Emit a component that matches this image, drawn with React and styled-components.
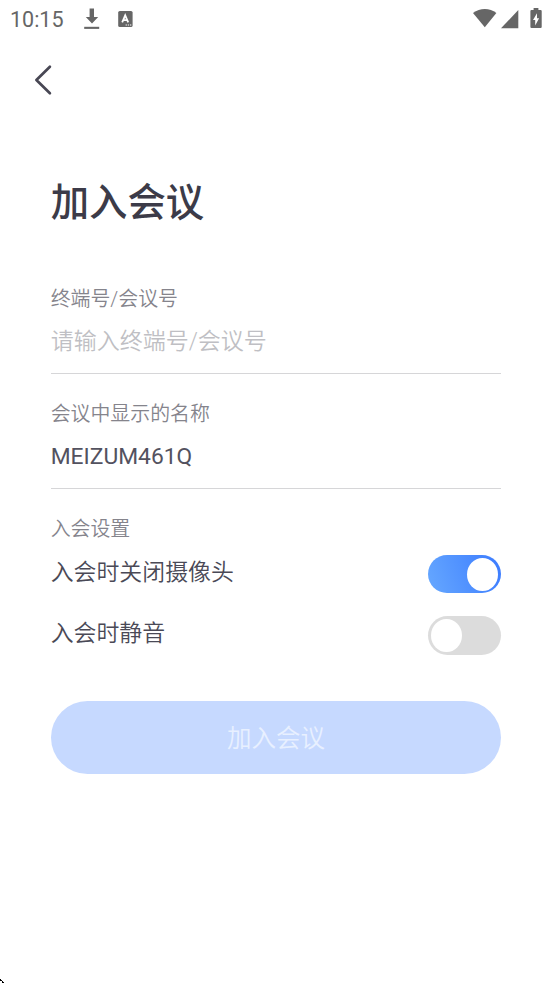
import React, { useState } from 'react';
import styled, { createGlobalStyle } from 'styled-components';

const App = () => {
  const [cameraOff, setCameraOff] = useState(true);
  const [muted, setMuted] = useState(false);

  return (
    <Screen>
      <GlobalStyle />
      <StatusBar>
        <Clock>10:15</Clock>
        <DownloadIcon />
        <KeyboardIcon />
        <StatusRight>
          <WifiIcon />
          <SignalIcon />
          <BatteryIcon />
        </StatusRight>
      </StatusBar>
      <NavBar>
        <BackButton aria-label="返回">
          <BackIcon />
        </BackButton>
      </NavBar>
      <Content>
        <Title>加入会议</Title>
        <Field>
          <Label>终端号/会议号</Label>
          <Value $empty>请输入终端号/会议号</Value>
        </Field>
        <Field>
          <Label>会议中显示的名称</Label>
          <Value>MEIZUM461Q</Value>
        </Field>
        <Label>入会设置</Label>
        <Setting>
          <SettingName>入会时关闭摄像头</SettingName>
          <Switch $on={cameraOff} onClick={() => setCameraOff(!cameraOff)}>
            <Knob />
          </Switch>
        </Setting>
        <Setting>
          <SettingName>入会时静音</SettingName>
          <Switch $on={muted} onClick={() => setMuted(!muted)}>
            <Knob />
          </Switch>
        </Setting>
        <JoinButton>
          <JoinText>加入会议</JoinText>
        </JoinButton>
      </Content>
      <Corner />
    </Screen>
  );
};

const DownloadIcon = () => (
  <Icon width="16" height="22" viewBox="0 0 16 22" $left="20px">
    <path d="M5.6 0.4h4.4v8.6h4.2L8 15.6 1.8 9h3.8z" />
    <rect x="0.2" y="18.8" width="15" height="2.1" />
  </Icon>
);

const KeyboardIcon = () => (
  <Icon width="15" height="17" viewBox="0 0 15 17" $left="18px">
    <rect x="0.2" y="0" width="14.4" height="16" rx="1.6" />
    <path d="M4.2 11.4 7.2 4.4 10.2 11.4M5.3 9.2h3.9" fill="none" stroke="#fff" strokeWidth="1.8" />
    <path d="M7.6 14h1.3M9.8 14h1.3M12 14h1.3" stroke="#fff" strokeWidth="1.2" />
  </Icon>
);

const WifiIcon = () => (
  <Icon width="24" height="20" viewBox="0 0 24 20">
    <path d="M0 4C3.6 1.3 7.6 0 11.8 0s8.2 1.3 11.6 4L11.8 18.2z" />
  </Icon>
);

const SignalIcon = () => (
  <Icon width="18" height="19" viewBox="0 0 18 19" $left="4px">
    <path d="M17.3 0V18.3H0z" />
  </Icon>
);

const BatteryIcon = () => (
  <Icon width="12" height="22" viewBox="0 0 12 22" $left="11px">
    <path d="M3.6 0h4.8v1.9h2.2q1.1 0 1.1 1.1v15.9q0 1.1-1.1 1.1H1.5q-1.1 0-1.1-1.1V3q0-1.1 1.1-1.1h2.1z" />
    <path d="M7 5.2 3 12H5.2V17.6L9.1 10.2H7z" fill="#fff" />
  </Icon>
);

const BackIcon = () => (
  <svg width="18" height="32" viewBox="0 0 18 32">
    <path
      d="M15.9 2.8 2.4 16l13.5 13.2"
      fill="none"
      stroke="#484754"
      strokeWidth="2.7"
      strokeLinecap="round"
      strokeLinejoin="round"
    />
  </svg>
);

const Corner = () => (
  <CornerMark width="4" height="4" viewBox="0 0 4 4">
    <path d="M0 0h1v1h1v1H0zM2 2h1v1h1v1H2z" />
  </CornerMark>
);

const GlobalStyle = createGlobalStyle`
  body {
    margin: 0;
    background: #fff;
    font-family: Roboto, 'Noto Sans CJK SC', sans-serif;
  }
`;

const Screen = styled.main`
  display: flex;
  flex-direction: column;
  position: relative;
  height: 983px;
  overflow: hidden;
  background: #fff;
`;

const StatusBar = styled.header`
  display: flex;
  align-items: center;
  box-sizing: border-box;
  height: 38px;
  padding: 0 10px;
  color: #666;
`;

const Clock = styled.span`
  width: 54px;
  padding-top: 2px;
  font-size: 21.5px;
  line-height: 36px;
  white-space: nowrap;
`;

const StatusRight = styled.div`
  display: flex;
  align-items: center;
  margin-left: auto;
`;

const Icon = styled.svg`
  display: block;
  flex: none;
  margin-left: ${(props) => props.$left || 0};
  fill: #666;
`;

const NavBar = styled.nav`
  display: flex;
  align-items: center;
  height: 84px;
  padding-left: 34px;
`;

const BackButton = styled.button`
  display: flex;
  padding: 0;
  border: none;
  background: none;
  cursor: pointer;
`;

const Content = styled.section`
  display: flex;
  flex-direction: column;
  padding: 53px 50.7px 0;
`;

const Title = styled.h1`
  margin: 0 0 55px;
  color: #3c3b48;
  font-size: 38.4px;
  font-weight: 500;
  line-height: 55px;
`;

const Field = styled.div`
  height: 87px;
  margin-bottom: 27px;
  border-bottom: 1px solid #d6d6d8;

  &:first-of-type {
    margin-top: 1px;
  }
`;

const Label = styled.div`
  color: #85848c;
  font-size: 19.9px;
  font-weight: 350;
  line-height: 28px;
`;

const Value = styled.div`
  margin-top: 11px;
  color: ${(props) => (props.$empty ? '#bfbfc4' : '#53525f')};
  font-size: ${(props) => (props.$empty ? '23px' : '22.8px')};
  font-weight: ${(props) => (props.$empty ? 350 : 400)};
  line-height: 34px;
`;

const Setting = styled.div`
  display: flex;
  align-items: center;
  justify-content: space-between;
  height: 61.5px;
`;

const SettingName = styled.span`
  padding-bottom: 4px;
  color: #4a4956;
  font-size: 22.9px;
  font-weight: 350;
  line-height: 34px;
`;

const Switch = styled.button`
  display: flex;
  align-items: center;
  justify-content: ${(props) => (props.$on ? 'flex-end' : 'flex-start')};
  box-sizing: border-box;
  width: 73.5px;
  height: 38.5px;
  margin-bottom: 1.5px;
  padding: 0 3px;
  border: none;
  border-radius: 20px;
  background: ${(props) => (props.$on ? 'linear-gradient(70deg, #66a8ff, #3b7bff)' : '#dcdcdc')};
  cursor: pointer;
`;

const Knob = styled.span`
  width: 31px;
  height: 33px;
  border-radius: 50%;
  background: #fff;
`;

const JoinButton = styled.button`
  height: 73.3px;
  margin-top: 34px;
  padding: 0;
  border: none;
  border-radius: 37px;
  background: #c6d9ff;
  cursor: pointer;
`;

const JoinText = styled.span`
  display: block;
  padding-bottom: 2px;
  color: #e8f0ff;
  font-family: Roboto, 'Noto Sans CJK SC', sans-serif;
  font-size: 24.5px;
  font-weight: 350;
`;

const CornerMark = styled.svg`
  position: absolute;
  left: 0;
  bottom: 0;
`;

export default App;
